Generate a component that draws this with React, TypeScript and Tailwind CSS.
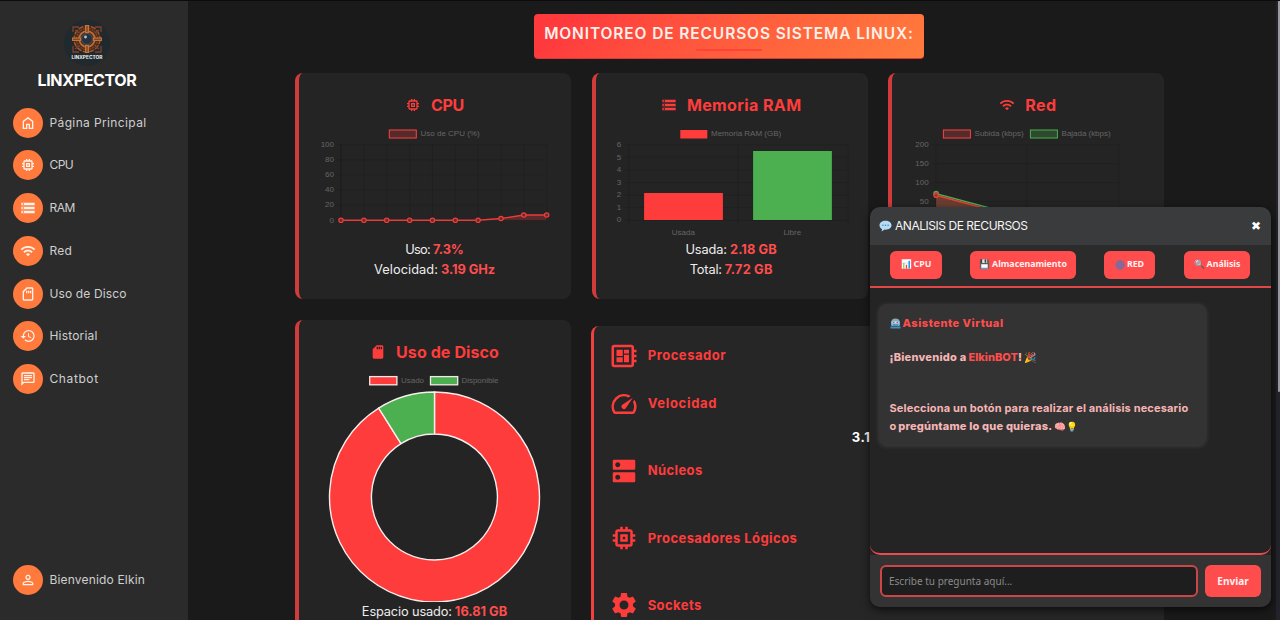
import type { ReactNode } from "react";
import type { IconType } from "react-icons";
import {
  MdMemory,
  MdStorage,
  MdWifi,
  MdOutlineSdCard,
  MdSdCard,
  MdHistory,
  MdOutlineChat,
  MdPersonOutline,
  MdDeveloperBoard,
  MdSpeed,
  MdDns,
  MdSettings,
} from "react-icons/md";

function HomeIcon({ className }: { className?: string }) {
  return (
    <svg viewBox="0 -960 960 960" fill="currentColor" className={className}>
      <path d="M240-200h120v-240h240v240h120v-360L480-740 240-560v360Zm-80 80v-480l320-240 320 240v480H520v-240h-80v240H160Z" />
    </svg>
  );
}

function Logo() {
  return (
    <svg viewBox="0 0 48 48" className="size-12">
      <circle cx="24" cy="24" r="23" fill="#20292e" />
      <circle cx="24" cy="20" r="13.500" fill="#4a2c20" />
      <g fill="none" stroke="#a8592b" strokeWidth="1.300">
        <circle cx="24" cy="20" r="13" strokeDasharray="5 1.5" />
        <circle cx="24" cy="20" r="10.500" stroke="#7d4426" strokeDasharray="2 1" />
        <circle cx="24" cy="20" r="7.800" stroke="#c06e34" strokeWidth="1.800" />
        <path d="M10 13V8h6M32 8h6v5M10 27v6h6M38 27v6h-6M12 11l4 3M36 11l-4 3M12 30l4-3M36 30l-4-3" stroke="#84402a" />
      </g>
      <path d="M22 6h4v8h-4zM22 26h4v8h-4zM9 18.500h9v3.500H9zM30 18.500h9v3.500h-9z" fill="#c57438" />
      <path d="M24 7v6M24 27v6M10 20.200h7M31 20.200h7" stroke="#6b3218" strokeWidth="1" />
      <circle cx="24" cy="20" r="5.500" fill="#28323c" stroke="#4a545e" strokeWidth="1" />
      <circle cx="22.500" cy="18" r="1.400" fill="#b9c6ce" />
      <text x="24" y="40.300" textAnchor="middle" textLength="31" fontSize="4.800" fontWeight="700" fill="#f4f4f4" fontFamily="Inter, sans-serif">
        LINXPECTOR
      </text>
    </svg>
  );
}

const nav: { label: string; icon: IconType | typeof HomeIcon; track: string }[] = [
  { label: "Página Principal", icon: HomeIcon, track: "tracking-[0.37px]" },
  { label: "CPU", icon: MdMemory, track: "tracking-[-0.6px]" },
  { label: "RAM", icon: MdStorage, track: "tracking-[-0.5px]" },
  { label: "Red", icon: MdWifi, track: "tracking-[0.2px]" },
  { label: "Uso de Disco", icon: MdOutlineSdCard, track: "tracking-[0.12px]" },
  { label: "Historial", icon: MdHistory, track: "tracking-[0.18px]" },
  { label: "Chatbot", icon: MdOutlineChat, track: "tracking-[0.6px]" },
];

function NavItem({ label, icon: Icon, track }: (typeof nav)[number]) {
  return (
    <a className="flex h-[30px] items-center gap-[6.500px]">
      <span className="flex size-[30px] shrink-0 items-center justify-center rounded-full bg-[#ff7a3c] text-[#fff4ec]">
        <Icon className="size-4" />
      </span>
      <span className={`whitespace-nowrap text-[12px] text-[#cfcfcf] ${track}`}>{label}</span>
    </a>
  );
}

function Card({ title, icon: Icon, track, children, className }: { title: string; icon: IconType; track: string; children: ReactNode; className: string }) {
  return (
    <section className={`flex flex-col items-center overflow-hidden rounded-lg border-l-4 border-[#d03b3b] bg-[#242424] pt-5 ${className}`}>
      <h2 className="mb-px flex h-6 items-center gap-[10px] pr-px text-[16px] font-bold text-[#ff3c3c]">
        <Icon className="size-4" />
        <span className={`whitespace-nowrap ${track}`}>{title}</span>
      </h2>
      {children}
    </section>
  );
}

function Stat({ label, value, lt, vt }: { label: string; value: string; lt: string; vt: string }) {
  return (
    <p className="flex h-5 items-center gap-[3px] whitespace-nowrap pr-px text-[12.800px] text-[#ededed]">
      <span className={lt}>{label}</span>
      <strong className={`font-bold text-[#ff4d4d] ${vt}`}>{value}</strong>
    </p>
  );
}

const grid = "#1f1f1f";
const cpuX = [341, 363.9, 386.7, 409.6, 432.4, 455.3, 478.1, 501, 523.8, 546.7];
const cpuY = [220.3, 220.3, 220.3, 220.3, 220.3, 220.3, 220.3, 218.5, 215, 215];

function CpuChart() {
  const line = cpuX.map((x, i) => `${x},${cpuY[i]}`).join(" ");
  return (
    <svg viewBox="299 118 272 122" className="h-[122px] w-[272px] shrink-0" fontFamily="Liberation Sans, sans-serif" fontSize="8" fill="#666">
      <rect x="389.300" y="130" width="27" height="8" fill="#552a2a" stroke="#ff4040" />
      <text x="420.500" y="136">Uso de CPU (%)</text>
      {cpuX.map((x, i) => (
        <path key={x} d={`M${x} 144.500V224`} stroke={i ? grid : "#171717"} strokeWidth="0.700" />
      ))}
      {[100, 80, 60, 40, 20, 0].map((v, i) => (
        <g key={v}>
          <path d={`M336 ${144.8 + i * 15.1}H547`} stroke={grid} strokeWidth="0.700" />
          <text x="334" y={147 + i * 15.1} textAnchor="end">{v}</text>
        </g>
      ))}
      <polygon points={`${line} 546.7,220.3 341,220.3`} fill="#ff3c3c" fillOpacity="0.25" />
      <polyline points={line} fill="none" stroke="#e63c3c" strokeWidth="1.400" />
      {cpuX.map((x, i) => (
        <circle key={x} cx={x} cy={cpuY[i]} r="2.200" fill="#6a2b2b" stroke="#f03c3c" strokeWidth="1.200" />
      ))}
    </svg>
  );
}

function RamChart() {
  return (
    <svg viewBox="595.7 118 272 122" className="h-[122px] w-[272px] shrink-0" fontFamily="Liberation Sans, sans-serif" fontSize="8" fill="#666">
      <rect x="680" y="130" width="27" height="8.500" fill="#ff3c3c" />
      <text x="710.700" y="136">Memoria RAM (GB)</text>
      {[628.5, 737.5, 848].map((x) => (
        <path key={x} d={`M${x} 144.500V224`} stroke={grid} strokeWidth="0.700" />
      ))}
      {[6, 5, 4, 3, 2, 1, 0].map((v, i) => (
        <g key={v}>
          <path d={`M624 ${144.8 + i * 12.58}H848`} stroke={grid} strokeWidth="0.700" />
          <text x="621" y={147 + i * 12.58} textAnchor="end">{v}</text>
        </g>
      ))}
      <rect x="643.800" y="193" width="78.800" height="27" fill="#ff3c3c" />
      <rect x="752.800" y="151" width="78.800" height="69" fill="#4caf50" />
      <text x="683" y="234.500" textAnchor="middle">Usada</text>
      <text x="792" y="234.500" textAnchor="middle">Libre</text>
    </svg>
  );
}

function NetChart() {
  return (
    <svg viewBox="892.4 118 272 122" className="h-[122px] w-[272px] shrink-0" fontFamily="Liberation Sans, sans-serif" fontSize="8" fill="#666">
      <rect x="943.800" y="130" width="27" height="8" fill="#552a2a" stroke="#ff4040" />
      <text x="975" y="136" textLength="49">Subida (kbps)</text>
      <rect x="1030.800" y="130" width="27" height="8" fill="#2d4a2e" stroke="#4caf50" />
      <text x="1062" y="136" textLength="49">Bajada (kbps)</text>
      {[936.5, 1027.5, 1119].map((x) => (
        <path key={x} d={`M${x} 144.500V224`} stroke={grid} strokeWidth="0.700" />
      ))}
      {[200, 150, 100, 50, 0].map((v, i) => (
        <g key={v}>
          <path d={`M932 ${144.8 + i * 18.9}H1119`} stroke={grid} strokeWidth="0.700" />
          <text x="929" y={147 + i * 18.9} textAnchor="end">{v}</text>
        </g>
      ))}
      <path d="M936.500 193.800L1027.500 218.500V220.600H936.500Z" fill="#4caf50" fillOpacity="0.2" />
      <path d="M936.500 195.300L1027.500 219.500V220.600H936.500Z" fill="#ff3c3c" fillOpacity="0.3" />
      <path d="M936.500 193.600L1027.500 218" stroke="#4caf50" strokeWidth="1.400" />
      <path d="M936.500 195.300L1027.500 219.600" stroke="#e8413a" strokeWidth="1.400" />
      <circle cx="936.500" cy="193.600" r="2.200" fill="#4d5a35" stroke="#4caf50" strokeWidth="1.200" />
      <circle cx="936.500" cy="195.300" r="2.200" fill="#8a3b2b" stroke="#f03c3c" strokeWidth="1.200" />
    </svg>
  );
}

function DiskChart() {
  return (
    <svg viewBox="299 365 272 237.5" className="h-[237.5px] w-[272px] shrink-0" fontFamily="Liberation Sans, sans-serif" fontSize="8" fill="#666">
      <rect x="369.700" y="376.600" width="27.200" height="8.200" fill="#ff3c3c" stroke="#f5e8e8" strokeWidth="1.300" />
      <text x="401" y="382.700" textLength="23">Usado</text>
      <rect x="430.500" y="376.600" width="27.200" height="8.200" fill="#4caf50" stroke="#f5e8e8" strokeWidth="1.300" />
      <text x="461.500" y="382.700" textLength="37">Disponible</text>
      <g stroke="#f7eeee" strokeWidth="1.400" strokeLinejoin="round">
        <path d="M434.500 392A105 105 0 1 1 378.700 408.050L401 443.600A63 63 0 1 0 434.500 434Z" fill="#ff3c3c" />
        <path d="M434.500 392A105 105 0 0 0 378.700 408.050L401 443.600A63 63 0 0 1 434.500 434Z" fill="#4caf50" />
      </g>
    </svg>
  );
}

const specs: { label: string; icon: IconType; value: string; track: string }[] = [
  { label: "Procesador", icon: MdDeveloperBoard, value: "", track: "tracking-[0.54px]" },
  { label: "Velocidad", icon: MdSpeed, value: "3.19 GHz", track: "tracking-[0.69px]" },
  { label: "Núcleos", icon: MdDns, value: "\u00a0", track: "tracking-[0.4px]" },
  { label: "Procesadores Lógicos", icon: MdMemory, value: "\u00a0", track: "tracking-[0.44px]" },
  { label: "Sockets", icon: MdSettings, value: "\u00a0", track: "tracking-[0.42px]" },
];

function ChatButton({ icon, label, className }: { icon: ReactNode; label: string; className: string }) {
  return (
    <button className={`flex h-7 items-center justify-center whitespace-nowrap rounded-md bg-[#ff4d4d] font-['Noto_Sans',sans-serif] text-[8.800px] font-bold text-[#fff1f1] ${className}`}>
      <span className="mr-[2px]">{icon}</span>
      {label}
    </button>
  );
}

function GlobeIcon() {
  return (
    <svg viewBox="0 0 10 10" className="size-[10px]">
      <circle cx="5" cy="5" r="4.800" fill="#94668f" />
      <path d="M5 .4v9.200M.4 5h9.200M5 .4C1.800 3 1.800 7 5 9.600M5 .4c3.200 2.600 3.200 6.600 0 9.200" fill="none" stroke="#7a6fa3" strokeWidth="0.700" />
    </svg>
  );
}

function SpeechIcon() {
  return (
    <svg viewBox="0 0 13 12" className="h-3 w-[13px]">
      <path d="M6.500.8C3 .8.500 2.700.500 5.300c0 1.700 1 3.100 2.600 3.900L2.600 11.600l3-2 .9.100c3.500 0 6-1.900 6-4.400S10 .8 6.500.8Z" fill="#b5dcf7" />
      <g fill="#4a86b8">
        <circle cx="3.900" cy="5.200" r="0.800" />
        <circle cx="6.500" cy="5.200" r="0.800" />
        <circle cx="9.100" cy="5.200" r="0.800" />
      </g>
    </svg>
  );
}

function RobotIcon() {
  return (
    <svg viewBox="0 0 11 11" className="size-[11px]">
      <path d="M1.500 3.500C1.500 1.500 3 .5 5.500.5s4 1 4 3z" fill="#8fa9b5" />
      <rect x="1" y="2.500" width="9" height="5.500" rx="1.500" fill="#6fb4dc" />
      <rect x="2.200" y="3.400" width="6.600" height="2.200" rx="1" fill="#d9dfea" />
      <circle cx="3.700" cy="4.500" r="0.800" fill="#d3423f" />
      <circle cx="7.300" cy="4.500" r="0.800" fill="#d3423f" />
      <path d="M.5 8.500h10v2H.5z" fill="#3f8fc4" />
      <path d="M3 7h5" stroke="#33536b" strokeWidth="0.700" />
    </svg>
  );
}

function ChatPanel() {
  return (
    <aside className="absolute left-[870px] top-[206px] flex h-[400px] w-[401px] flex-col overflow-hidden rounded-[10px] bg-[#242424] shadow-[0_3px_9px_rgba(0,0,0,0.65)]">
      <header className="flex h-[38px] shrink-0 items-center justify-between bg-[#3a3b3c] pl-[9px] pr-[10px] text-[12px] text-[#f5f5f5]">
        <span className="flex items-center gap-[3px] whitespace-nowrap">
          <SpeechIcon />
          <span className="tracking-[-0.46px]">ANALISIS DE RECURSOS</span>
        </span>
        <span className="font-['DejaVu_Sans',sans-serif] text-[12px] font-bold text-white">✖</span>
      </header>
      <div className="flex h-[43px] shrink-0 items-start border-b-2 border-[#e04848] bg-[#2b2b2b] pl-5 pt-[6px]">
        <ChatButton icon="📊" label="CPU" className="mr-7 w-[52px]" />
        <ChatButton icon="💾" label="Almacenamiento" className="mr-7 w-[106px]" />
        <ChatButton icon={<GlobeIcon />} label="RED" className="mr-[29px] w-[51px]" />
        <ChatButton icon="🔍" label="Análisis" className="w-[66px]" />
      </div>
      <div className="flex-1 bg-[#2b2226]">
        <div className="h-full rounded-b-[10px] border-b-2 border-[#e84c4e] bg-[#242424] pl-[9px] pt-4">
          <div className="h-[141px] w-[327px] rounded-lg bg-[#333] pl-[10.500px] pt-[11px] text-[11px] font-bold leading-[17.200px] text-[#f5b5b5] shadow-[0_1px_5px_rgba(255,255,255,0.14)]">
            <p className="flex items-center gap-[2px] font-extrabold text-[#ff4d4d]">
              <RobotIcon />
              <span className="tracking-[0.53px]">Asistente Virtual</span>
            </p>
            <p className="mt-[17px] flex items-center gap-[2px] font-extrabold">
              <span className="tracking-[0.25px]">¡Bienvenido a</span>
              <span>
                <span className="text-[#ff4d4d]">ElkinBOT</span>!
              </span>
              <span className="text-[10px]">🎉</span>
            </p>
            <p className="mt-[34px] whitespace-nowrap tracking-[0.15px]">Selecciona un botón para realizar el análisis necesario</p>
            <p className="flex items-center gap-[2px] whitespace-nowrap">
              <span>o</span>
              <span className="font-extrabold tracking-[0.19px]">pregúntame lo que quieras.</span>
              <span className="text-[9.500px]">🧠💡</span>
            </p>
          </div>
        </div>
      </div>
      <footer className="flex h-[52px] shrink-0 gap-[7px] bg-[#333] pl-[10px] pr-[10px] pt-[10px] font-['Noto_Sans',sans-serif]">
        <input
          placeholder="Escribe tu pregunta aquí..."
          className="h-8 w-[318px] rounded-md border-2 border-[#cc4547] bg-[#1e1e1e] px-[7px] text-[10px] placeholder:text-[#8a8a8a]"
        />
        <button className="h-8 flex-1 rounded-md bg-[#ff4d4d] text-[10px] font-bold text-[#fff1f1]">Enviar</button>
      </footer>
    </aside>
  );
}

export default function App() {
  return (
    <div className="relative flex h-[620px] w-[1280px] overflow-hidden border-t border-[#0c0c0c] bg-[#1a1a1a] font-['Inter',sans-serif]">
      <nav className="flex w-[187.500px] shrink-0 flex-col bg-[#2b2b2b] pl-[13px] pt-[18px]">
        <div className="flex w-[148px] flex-col items-center">
          <Logo />
          <h1 className="mt-px h-6 text-[16px] font-bold leading-6 tracking-[-0.35px] text-white">LINXPECTOR</h1>
        </div>
        <div className="mt-[15.500px] flex flex-col gap-[12.800px]">
          {nav.map((n) => (
            <NavItem key={n.label} {...n} />
          ))}
        </div>
        <div className="mb-[25.500px] mt-auto">
          <NavItem label="Bienvenido Elkin" icon={MdPersonOutline} track="tracking-[0.17px]" />
        </div>
      </nav>

      <main className="flex w-[1088.5px] flex-col pl-[107.5px] pt-[13px]">
        <div className="ml-[239px] flex h-[45px] w-[390px] shrink-0 flex-col items-center rounded-[4px] border-b border-[#d93a35] bg-linear-135 from-[#ff3a3d] from-10% to-[#ff7b3c] pt-[8px]">
          <h1 className="h-6 whitespace-nowrap text-[15.500px] font-semibold leading-[24px] tracking-[0.88px] text-[#fff0ea]">MONITOREO DE RECURSOS SISTEMA LINUX:</h1>
          <span className="mt-[3px] h-[2px] w-[66px] rounded bg-[#ff4338]" />
        </div>

        <div className="mt-[14px] grid grid-cols-[276px_276px_276px] items-start gap-x-[20.700px] gap-y-[20.500px]">
          <Card title="CPU" icon={MdMemory} track="tracking-[-0.3px]" className="h-[226px]">
            <CpuChart />
            <Stat label="Uso:" value="7.3%" lt="tracking-[-0.7px]" vt="tracking-[-0.1px]" />
            <Stat label="Velocidad:" value="3.19 GHz" lt="tracking-[0.06px]" vt="tracking-[-0.06px]" />
          </Card>
          <Card title="Memoria RAM" icon={MdStorage} track="tracking-[0.39px]" className="h-[226px]">
            <RamChart />
            <Stat label="Usada:" value="2.18 GB" lt="tracking-[-0.11px]" vt="tracking-[0.12px]" />
            <Stat label="Total:" value="7.72 GB" lt="tracking-[-0.19px]" vt="tracking-[0.2px]" />
          </Card>
          <Card title="Red" icon={MdWifi} track="tracking-[0.36px]" className="h-[226px]">
            <NetChart />
          </Card>
          <Card title="Uso de Disco" icon={MdSdCard} track="tracking-[0.1px]" className="h-[400px]">
            <DiskChart />
            <Stat label="Espacio usado:" value="16.81 GB" lt="tracking-[-0.14px]" vt="" />
          </Card>
          <section className="col-span-2 -ml-px mt-[6px] flex h-[394px] flex-col rounded-lg border-l-[3px] border-[#f04040] bg-[#262626] pl-[15px] pt-[6px]">
            {specs.map(({ label, icon: Icon, value, track }) => (
              <div key={label} className="shrink-0 text-[13px] font-bold">
                <div className="flex h-12 items-center gap-[9px] text-[#ff3c3c]">
                  <Icon className="size-[30px]" />
                  <span className={`pt-px ${track}`}>{label}</span>
                </div>
                {value && <p className="h-[19.200px] pl-[243px] leading-[19px] tracking-[0.6px] text-white">{value}</p>}
              </div>
            ))}
          </section>
        </div>
      </main>

      <div className="flex w-1 shrink-0 justify-end bg-[#23232c]">
        <span className="h-[391px] w-[2px] rounded-b bg-[#9a9a9e]" />
      </div>

      <ChatPanel />
    </div>
  );
}
